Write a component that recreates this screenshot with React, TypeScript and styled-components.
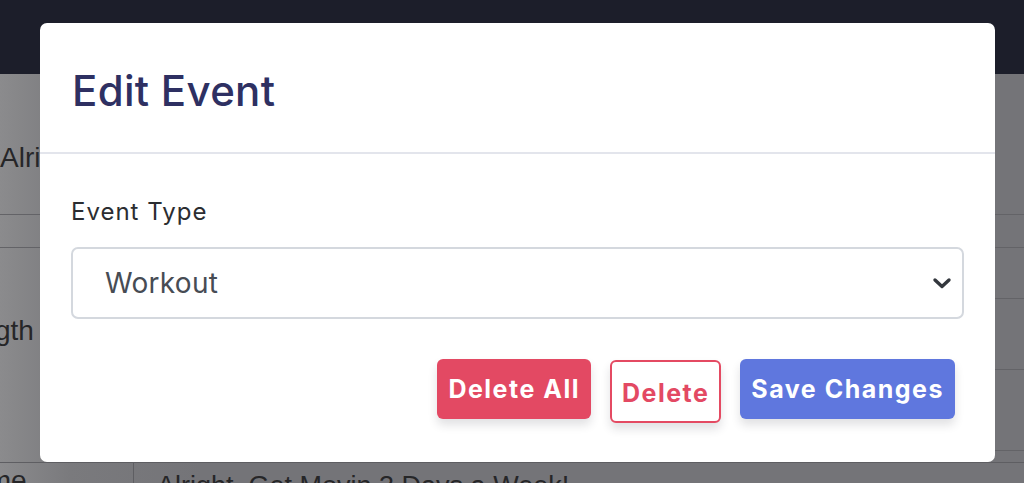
import React from "react";
import styled, { createGlobalStyle } from "styled-components";

const Global = createGlobalStyle`
  html, body { margin: 0; padding: 0; }
  body { font-family: Inter, "Noto Sans", sans-serif; overflow: hidden; }
  #root { width: 1024px; height: 483px; }
`;

const Page = styled.div`
  position: relative;
  width: 1024px;
  height: 483px;
  overflow: hidden;
  display: flex;
  flex-direction: column;
  background: linear-gradient(90deg, #8b8b8d 0, #7a7a7d 70px, #747478 200px, #747478 100%);
`;

const NavBar = styled.div`
  height: 74px;
  flex: none;
  background: #1c1e2a;
`;

const Table = styled.div`
  display: flex;
  flex-direction: column;
  flex: 1;
`;

const Row = styled.div<{ $h: number; $line?: boolean }>`
  height: ${(p) => p.$h}px;
  flex: none;
  display: flex;
  border-bottom: ${(p) => (p.$line ? "1px solid #636367" : "none")};
  box-sizing: border-box;
`;

const WideText = styled.div`
  font-family: "Liberation Sans", Arial, sans-serif;
  font-size: 28px;
  color: #262628;
  padding-top: 68px;
  white-space: nowrap;
`;

const SideCell = styled.div`
  width: 133px;
  flex: none;
  position: relative;
  display: flex;
  flex-direction: column;
`;

const SideLabel = styled.div<{ $top: number; $left: number }>`
  font-family: "Liberation Sans", Arial, sans-serif;
  font-size: 28px;
  color: #262628;
  margin-top: ${(p) => p.$top}px;
  margin-left: ${(p) => p.$left}px;
  white-space: nowrap;
`;

const MainCell = styled.div`
  flex: 1;
  display: flex;
  flex-direction: column;
`;

const SubRow = styled.div<{ $h: number }>`
  height: ${(p) => p.$h}px;
  flex: none;
  border-bottom: 1px solid #636367;
`;

const LastRow = styled.div`
  display: flex;
  flex: 1;
  border-top: 1px solid #5e5e62;
`;

const BottomMain = styled.div`
  flex: 1;
  border-left: 1px solid #5e5e62;
  padding: 8px 0 0 23px;
  font-family: "Liberation Sans", Arial, sans-serif;
  font-size: 27px;
  color: #262628;
  white-space: nowrap;
`;

const Modal = styled.div`
  position: absolute;
  left: 40px;
  top: 23px;
  width: 955px;
  height: 439px;
  background: #fff;
  border-radius: 7px;
  display: flex;
  flex-direction: column;
  box-sizing: border-box;
`;

const Header = styled.div`
  height: 131px;
  box-sizing: border-box;
  border-bottom: 2px solid #e3e5ec;
  display: flex;
  align-items: center;
  padding: 6px 32px 0;
`;

const Title = styled.h2`
  margin: 0;
  font-size: 42px;
  font-weight: 500;
  color: #2e3062;
  letter-spacing: 0.3px;
`;

const Body = styled.div`
  padding: 44px 31px 0;
  display: flex;
  flex-direction: column;
`;

const Label = styled.label`
  font-size: 24px;
  color: #2b2d31;
  letter-spacing: 1px;
  line-height: 28px;
`;

const SelectBox = styled.div`
  margin-top: 21px;
  height: 72px;
  box-sizing: border-box;
  border: 2px solid #d4d8de;
  border-radius: 7px;
  display: flex;
  align-items: center;
  justify-content: space-between;
  padding: 0 8px 0 32px;
`;

const SelectText = styled.span`
  font-size: 28px;
  color: #474c54;
  letter-spacing: 0.3px;
`;

const Footer = styled.div`
  display: flex;
  justify-content: flex-end;
  align-items: flex-start;
  gap: 19px;
  padding: 40px 40px 0;
`;

const Button = styled.button<{ $variant: "danger" | "outline" | "primary" }>`
  height: ${(p) => (p.$variant === "outline" ? "63px" : "60px")};
  margin-top: ${(p) => (p.$variant === "outline" ? "1px" : "0")};
  box-sizing: border-box;
  border-radius: 6px;
  font-family: Inter, "Noto Sans", sans-serif;
  font-size: 25px;
  font-weight: 700;
  letter-spacing: 1.5px;
  padding: ${(p) => (p.$variant === "outline" ? "2px 10px 0" : "0 11px")};
  border: ${(p) =>
    p.$variant === "outline" ? "2px solid #e44a62" : "none"};
  background: ${(p) =>
    p.$variant === "danger" ? "#e34963" : p.$variant === "primary" ? "#5f77de" : "#fff"};
  color: ${(p) => (p.$variant === "outline" ? "#e34963" : "#fff")};
  box-shadow: 0 6px 10px rgba(40, 40, 60, 0.14);
  cursor: pointer;
`;

export default function App() {
  return (
    <>
      <Global />
      <Page>
        <NavBar />
        <Table>
          <Row $h={141} $line>
            <WideText>Alright, Get Movin 3 Days a Week!</WideText>
          </Row>
          <Row $h={33} $line />
          <Row $h={214}>
            <SideCell>
              <SideLabel $top={67} $left={-72}>Strength</SideLabel>
            </SideCell>
            <MainCell>
              <SubRow $h={50} />
              <SubRow $h={70} />
              <SubRow $h={80} />
            </MainCell>
          </Row>
          <LastRow>
            <SideCell>
              <SideLabel $top={2} $left={-48}>Name</SideLabel>
            </SideCell>
            <BottomMain>Alright, Get Movin 3 Days a Week!</BottomMain>
          </LastRow>
        </Table>

        <Modal role="dialog">
          <Header>
            <Title>Edit Event</Title>
          </Header>
          <Body>
            <Label>Event Type</Label>
            <SelectBox>
              <SelectText>Workout</SelectText>
              <svg width="24" height="24" viewBox="0 0 24 24" fill="none">
                <path d="M5 9l7 6.5L19 9" stroke="#33373d" strokeWidth="3.4" strokeLinecap="round" strokeLinejoin="round" />
              </svg>
            </SelectBox>
          </Body>
          <Footer>
            <Button $variant="danger">Delete All</Button>
            <Button $variant="outline">Delete</Button>
            <Button $variant="primary">Save Changes</Button>
          </Footer>
        </Modal>
      </Page>
    </>
  );
}
